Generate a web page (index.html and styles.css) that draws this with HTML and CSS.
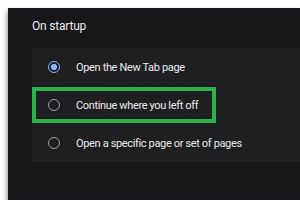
FILE: index.html
```html
<!DOCTYPE html>
<html lang="en">
<head>
    <meta charset="UTF-8">
    <title>On startup</title>
    <link rel="stylesheet" href="styles.css">
</head>
<body>
    <div class="panel">
        <div class="title">On startup</div>
        <div class="card">
            <div class="row">
                <span class="radio checked"></span>
                <span class="label">Open the New Tab page</span>
            </div>
            <div class="row">
                <span class="radio"></span>
                <span class="label">Continue where you left off</span>
                <span class="highlight"></span>
            </div>
            <div class="row">
                <span class="radio"></span>
                <span class="label">Open a specific page or set of pages</span>
            </div>
        </div>
    </div>
</body>
</html>
```

FILE: styles.css
```css
body {
    margin: 0;
    padding: 8px 0 0 8px;
    background: #ffffff;
    font-family: Roboto, 'Liberation Sans', sans-serif;
}
.panel {
    background: #17171a;
    height: 192px;
    padding-left: 24px;
    box-shadow: -1px 3px 5px rgba(0,0,0,0.45);
}
.title {
    height: 40px;
    box-sizing: border-box;
    padding-top: 11px;
    font-size: 12px;
    line-height: 14px;
    letter-spacing: -0.2px;
    color: #e8eaed;
}
.card {
    background: #1f1f22;
    border-top-left-radius: 4px;
}
.row {
    position: relative;
    display: flex;
    align-items: center;
    height: 38px;
    padding-left: 16px;
    gap: 16px;
}
.radio {
    width: 12px;
    height: 12px;
    border: 1.5px solid #9aa0a6;
    border-radius: 50%;
    box-sizing: border-box;
    flex-shrink: 0;
}
.radio.checked {
    border-color: #8ab4f8;
    background: radial-gradient(circle, #8ab4f8 2.8px, transparent 3.3px);
}
.label {
    font-size: 11px;
    letter-spacing: -0.35px;
    color: #e8eaed;
}
.highlight {
    position: absolute;
    left: 0;
    top: 1px;
    width: 184px;
    height: 36px;
    border: 4px solid #2db14a;
    box-sizing: border-box;
}
```
